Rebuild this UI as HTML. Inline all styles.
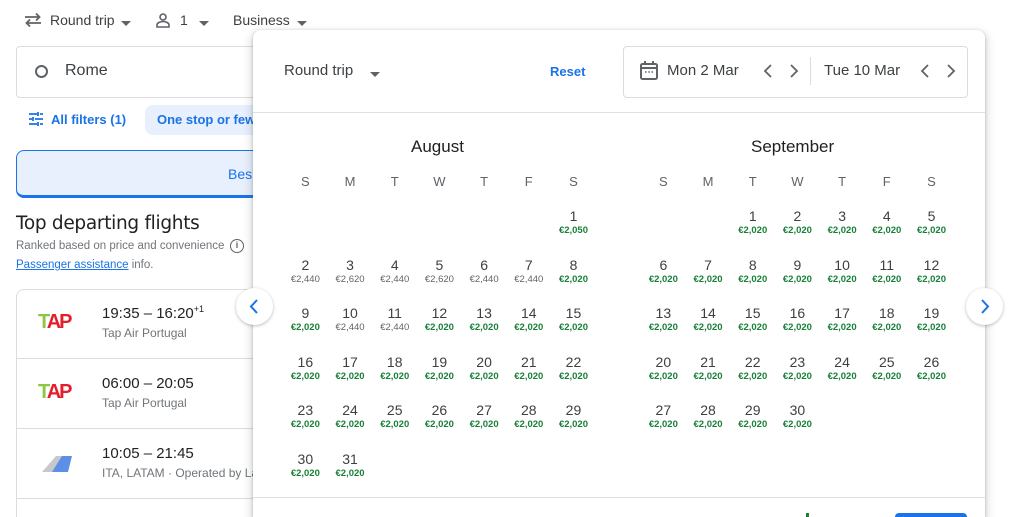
<!DOCTYPE html>
<html style="height:517px;overflow:hidden"><head><meta charset="utf-8"><style>
*{box-sizing:border-box;margin:0;padding:0}
body{width:1024px;height:517px;overflow:hidden;background:#fff;font-family:"Liberation Sans",Arial,sans-serif;color:#3c4043;position:relative}
.a{position:absolute;white-space:nowrap}
.tri{display:inline-block;width:0;height:0;border-left:5px solid transparent;border-right:5px solid transparent;border-top:5px solid #5f6368;vertical-align:middle}
.grid{position:absolute;display:grid;grid-template-columns:repeat(7,44.7px);grid-auto-rows:48.5px;text-align:center}
.n{font-size:14px;color:#3c4043;line-height:16px;display:block}
.p{font-size:9.5px;color:#188038;font-weight:bold;line-height:11px;display:block;margin-top:1px}
.g{color:#5f6368;font-weight:normal}
.wk{position:absolute;display:grid;grid-template-columns:repeat(7,44.7px);text-align:center;font-size:13px;color:#5f6368}
.row{position:absolute;left:16px;width:260px;height:70px;border-bottom:1px solid #dadce0}
</style></head><body>
<svg class="a" style="left:24px;top:12px" width="18" height="16" viewBox="0 0 18 16"><path d="M1 5h14M12 1.5l3.5 3.5-3.5 3.5M17 11H3M6 7.5L2.5 11 6 14.5" fill="none" stroke="#5f6368" stroke-width="1.8"/></svg>
<div class="a" style="left:50px;top:12px;font-size:14px">Round trip</div><div class="a" style="left:121px;top:15px"><span class="tri"></span></div>
<svg class="a" style="left:155px;top:12px" width="16" height="16" viewBox="0 0 16 16"><circle cx="8" cy="5" r="3" fill="none" stroke="#5f6368" stroke-width="1.6"/><path d="M2 15v-2c0-2 3-3.5 6-3.5s6 1.5 6 3.5v2z" fill="none" stroke="#5f6368" stroke-width="1.6"/></svg>
<div class="a" style="left:180px;top:12px;font-size:14px">1</div><div class="a" style="left:199px;top:15px"><span class="tri"></span></div>
<div class="a" style="left:233px;top:12px;font-size:14px">Business</div><div class="a" style="left:297px;top:15px"><span class="tri"></span></div>
<div class="a" style="left:16px;top:46px;width:260px;height:52px;border:1px solid #dadce0;border-radius:4px"></div>
<div class="a" style="left:35px;top:65px;width:13px;height:13px;border:2.5px solid #5f6368;border-radius:50%"></div>
<div class="a" style="left:65px;top:62px;font-size:16px">Rome</div>
<svg class="a" style="left:28px;top:112px" width="16" height="14" viewBox="0 0 16 14"><path d="M1 2h8M12 2h3M1 7h3M7 7h8M1 12h8M12 12h3M10 0v4M5 5v4M10 10v4" stroke="#1a73e8" stroke-width="1.8" fill="none"/></svg>
<div class="a" style="left:51px;top:112px;font-size:13px;color:#1a73e8;font-weight:bold">All filters (1)</div>
<div class="a" style="left:145px;top:105px;width:140px;height:30px;background:#e8f0fe;border-radius:8px"></div>
<div class="a" style="left:157px;top:112px;font-size:13px;color:#1a73e8;font-weight:bold">One stop or few</div>
<div class="a" style="left:16px;top:150px;width:260px;height:48px;background:#e8f0fe;border:1px solid #1a73e8;border-bottom:3px solid #1a73e8;border-radius:8px"></div>
<div class="a" style="left:228px;top:166px;font-size:14px;color:#1a73e8">Bes</div>
<div class="a" style="left:16px;top:213px;font-size:18.5px;color:#202124;font-family:'DejaVu Sans',sans-serif;letter-spacing:-0.3px">Top departing flights</div>
<div class="a" style="left:16px;top:240px;font-size:11.5px;color:#70757a">Ranked based on price and convenience</div>
<div class="a" style="left:230px;top:239px;width:14px;height:14px;border:1.5px solid #5f6368;border-radius:50%;font-size:9px;text-align:center;line-height:11px;color:#5f6368;font-weight:bold">i</div>
<div class="a" style="left:16px;top:259px;font-size:11.5px;color:#70757a"><span style="color:#1a73e8;text-decoration:underline">Passenger assistance</span> info.</div>
<div class="a" style="left:16px;top:289px;width:260px;height:228px;border:1px solid #dadce0;border-bottom:none;border-radius:8px 8px 0 0"></div>
<div class="row" style="top:289px"></div><div class="row" style="top:359px"></div><div class="row" style="top:429px"></div>
<div class="a" style="left:38px;top:311px;font-size:20px;font-weight:900;letter-spacing:-2px"><span style="color:#8dc63f">T</span><span style="color:#e41e2b">AP</span></div>
<div class="a" style="left:38px;top:381px;font-size:20px;font-weight:900;letter-spacing:-2px"><span style="color:#8dc63f">T</span><span style="color:#e41e2b">AP</span></div>
<svg class="a" style="left:40px;top:452px" width="32" height="22" viewBox="0 0 32 22"><path d="M2 20L16 4h12l-10 16z" fill="#c6c8cc"/><path d="M12 20L22 4h10l-4 16z" fill="#5c8fe6"/></svg>
<div class="a" style="left:102px;top:304px;font-size:15px;color:#202124">19:35 – 16:20<sup style="font-size:9px">+1</sup></div>
<div class="a" style="left:102px;top:326px;font-size:12px;color:#70757a">Tap Air Portugal</div>
<div class="a" style="left:102px;top:375px;font-size:15px;color:#202124">06:00 – 20:05</div>
<div class="a" style="left:102px;top:396px;font-size:12px;color:#70757a">Tap Air Portugal</div>
<div class="a" style="left:102px;top:445px;font-size:15px;color:#202124">10:05 – 21:45</div>
<div class="a" style="left:102px;top:466px;font-size:12px;color:#70757a">ITA, LATAM · Operated by Lat</div>
<div class="a" style="left:253px;top:30px;width:732px;height:487px;background:#fff;border-radius:8px 8px 0 0;box-shadow:0 1px 3px rgba(60,64,67,.3),0 4px 8px 3px rgba(60,64,67,.15)"></div>
<div class="a" style="left:253px;top:112px;width:732px;height:1px;background:#e0e0e0"></div>
<div class="a" style="left:253px;top:497px;width:732px;height:1px;background:#e0e0e0"></div>
<div class="a" style="left:284px;top:62px;font-size:15px">Round trip</div><div class="a" style="left:370px;top:66px"><span class="tri"></span></div>
<div class="a" style="left:550px;top:64px;font-size:13px;color:#1a73e8;font-weight:bold">Reset</div>
<div class="a" style="left:623px;top:46px;width:345px;height:52px;border:1px solid #dadce0;border-radius:4px"></div>
<div class="a" style="left:810px;top:57px;width:1px;height:28px;background:#dadce0"></div>
<svg class="a" style="left:640px;top:61px" width="18" height="19" viewBox="0 0 18 19"><rect x="1" y="3" width="16" height="15" rx="1.5" fill="none" stroke="#5f6368" stroke-width="2"/><path d="M1 7h16M5 0v4M13 0v4" stroke="#5f6368" stroke-width="2"/><path d="M5 11h1.5M8.3 11h1.5M11.5 11h1.5" stroke="#5f6368" stroke-width="1.5"/></svg>
<div class="a" style="left:667px;top:62px;font-size:15px">Mon 2 Mar</div>
<div class="a" style="left:824px;top:62px;font-size:15px">Tue 10 Mar</div>
<svg class="a" style="left:763px;top:64px" width="40" height="14" viewBox="0 0 40 14"><path d="M8 1L2 7l6 6M28 1l6 6-6 6" fill="none" stroke="#5f6368" stroke-width="1.8"/></svg>
<svg class="a" style="left:920px;top:64px" width="40" height="14" viewBox="0 0 40 14"><path d="M8 1L2 7l6 6M28 1l6 6-6 6" fill="none" stroke="#5f6368" stroke-width="1.8"/></svg>
<div class="a" style="left:411px;top:137px;font-size:17px;color:#202124">August</div>
<div class="a" style="left:751px;top:137px;font-size:17px;color:#202124">September</div>
<div class="wk" style="left:283px;top:174px"><div>S</div><div>M</div><div>T</div><div>W</div><div>T</div><div>F</div><div>S</div></div>
<div class="wk" style="left:641px;top:174px"><div>S</div><div>M</div><div>T</div><div>W</div><div>T</div><div>F</div><div>S</div></div>
<div class="grid" style="left:283px;top:208px">
<div></div><div></div><div></div><div></div><div></div><div></div><div><span class="n">1</span><span class="p">€2,050</span></div>
<div><span class="n">2</span><span class="p g">€2,440</span></div><div><span class="n">3</span><span class="p g">€2,620</span></div><div><span class="n">4</span><span class="p g">€2,440</span></div><div><span class="n">5</span><span class="p g">€2,620</span></div><div><span class="n">6</span><span class="p g">€2,440</span></div><div><span class="n">7</span><span class="p g">€2,440</span></div><div><span class="n">8</span><span class="p">€2,020</span></div>
<div><span class="n">9</span><span class="p">€2,020</span></div><div><span class="n">10</span><span class="p g">€2,440</span></div><div><span class="n">11</span><span class="p g">€2,440</span></div><div><span class="n">12</span><span class="p">€2,020</span></div><div><span class="n">13</span><span class="p">€2,020</span></div><div><span class="n">14</span><span class="p">€2,020</span></div><div><span class="n">15</span><span class="p">€2,020</span></div>
<div><span class="n">16</span><span class="p">€2,020</span></div><div><span class="n">17</span><span class="p">€2,020</span></div><div><span class="n">18</span><span class="p">€2,020</span></div><div><span class="n">19</span><span class="p">€2,020</span></div><div><span class="n">20</span><span class="p">€2,020</span></div><div><span class="n">21</span><span class="p">€2,020</span></div><div><span class="n">22</span><span class="p">€2,020</span></div>
<div><span class="n">23</span><span class="p">€2,020</span></div><div><span class="n">24</span><span class="p">€2,020</span></div><div><span class="n">25</span><span class="p">€2,020</span></div><div><span class="n">26</span><span class="p">€2,020</span></div><div><span class="n">27</span><span class="p">€2,020</span></div><div><span class="n">28</span><span class="p">€2,020</span></div><div><span class="n">29</span><span class="p">€2,020</span></div>
<div><span class="n">30</span><span class="p">€2,020</span></div><div><span class="n">31</span><span class="p">€2,020</span></div>
</div>
<div class="grid" style="left:641px;top:208px">
<div></div><div></div><div><span class="n">1</span><span class="p">€2,020</span></div><div><span class="n">2</span><span class="p">€2,020</span></div><div><span class="n">3</span><span class="p">€2,020</span></div><div><span class="n">4</span><span class="p">€2,020</span></div><div><span class="n">5</span><span class="p">€2,020</span></div>
<div><span class="n">6</span><span class="p">€2,020</span></div><div><span class="n">7</span><span class="p">€2,020</span></div><div><span class="n">8</span><span class="p">€2,020</span></div><div><span class="n">9</span><span class="p">€2,020</span></div><div><span class="n">10</span><span class="p">€2,020</span></div><div><span class="n">11</span><span class="p">€2,020</span></div><div><span class="n">12</span><span class="p">€2,020</span></div>
<div><span class="n">13</span><span class="p">€2,020</span></div><div><span class="n">14</span><span class="p">€2,020</span></div><div><span class="n">15</span><span class="p">€2,020</span></div><div><span class="n">16</span><span class="p">€2,020</span></div><div><span class="n">17</span><span class="p">€2,020</span></div><div><span class="n">18</span><span class="p">€2,020</span></div><div><span class="n">19</span><span class="p">€2,020</span></div>
<div><span class="n">20</span><span class="p">€2,020</span></div><div><span class="n">21</span><span class="p">€2,020</span></div><div><span class="n">22</span><span class="p">€2,020</span></div><div><span class="n">23</span><span class="p">€2,020</span></div><div><span class="n">24</span><span class="p">€2,020</span></div><div><span class="n">25</span><span class="p">€2,020</span></div><div><span class="n">26</span><span class="p">€2,020</span></div>
<div><span class="n">27</span><span class="p">€2,020</span></div><div><span class="n">28</span><span class="p">€2,020</span></div><div><span class="n">29</span><span class="p">€2,020</span></div><div><span class="n">30</span><span class="p">€2,020</span></div>
</div>
<div class="a" style="left:236px;top:288px;width:37px;height:37px;border-radius:50%;background:#fff;box-shadow:0 1px 3px rgba(60,64,67,.35)"></div>
<svg class="a" style="left:248px;top:298px" width="12" height="17" viewBox="0 0 12 17"><path d="M9 2L3 8.5 9 15" fill="none" stroke="#1a73e8" stroke-width="2"/></svg>
<div class="a" style="left:966px;top:288px;width:37px;height:37px;border-radius:50%;background:#fff;box-shadow:0 1px 3px rgba(60,64,67,.35)"></div>
<svg class="a" style="left:979px;top:298px" width="12" height="17" viewBox="0 0 12 17"><path d="M3 2l6 6.5L3 15" fill="none" stroke="#1a73e8" stroke-width="2"/></svg>
<div class="a" style="left:895px;top:513px;width:72px;height:4px;border-radius:10px 10px 0 0;background:#1a73e8"></div>
<div class="a" style="left:806px;top:513px;width:3px;height:4px;background:#188038"></div>
</body></html>
